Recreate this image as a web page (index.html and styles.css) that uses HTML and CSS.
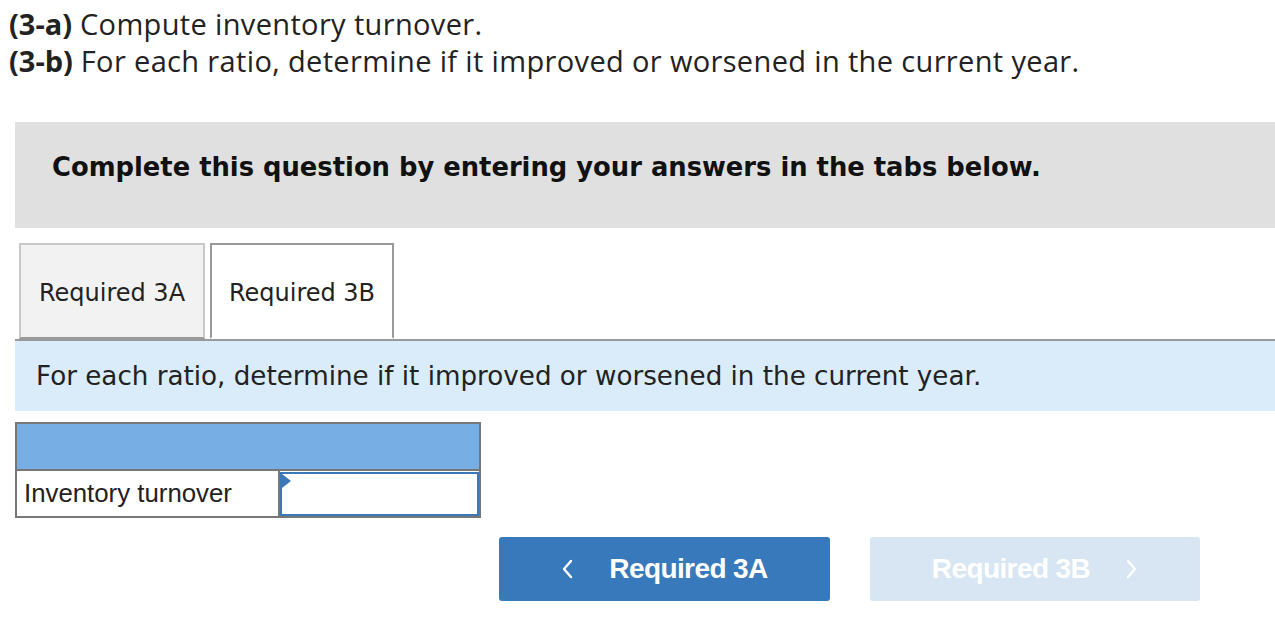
FILE: index.html
```html
<!DOCTYPE html>
<html>
<head>
<meta charset="utf-8">
<link rel="stylesheet" href="styles.css">
</head>
<body>
<div class="intro">
  <p class="line"><b>(3-a)</b> Compute inventory turnover.</p>
  <p class="line"><b>(3-b)</b> For each ratio, determine if it improved or worsened in the current year.</p>
</div>
<div class="wrap">
  <div class="notice">Complete this question by entering your answers in the tabs below.</div>
  <div class="tabs">
    <div class="tab tab-off">Required 3A</div>
    <div class="tab tab-on">Required 3B</div>
  </div>
  <div class="prompt">For each ratio, determine if it improved or worsened in the current year.</div>
  <div class="grid">
    <div class="grid-head"></div>
    <div class="grid-row">
      <div class="cell-label">Inventory turnover</div>
      <div class="cell-input"><span class="flag"></span></div>
    </div>
  </div>
  <div class="nav">
    <div class="btn btn-prev"><svg class="chev chev-l" width="14" height="22" viewBox="0 0 14 22"><polyline points="10,3 3,11 10,19" fill="none" stroke="#fff" stroke-width="2.4" stroke-linecap="round" stroke-linejoin="round"/></svg>Required 3A</div>
    <div class="btn btn-next">Required 3B<svg class="chev chev-r" width="14" height="22" viewBox="0 0 14 22"><polyline points="4,3 11,11 4,19" fill="none" stroke="#fff" stroke-width="2.4" stroke-linecap="round" stroke-linejoin="round"/></svg></div>
  </div>
</div>
</body>
</html>
```
FILE: styles.css
```css
html, body { margin: 0; padding: 0; background: #fff; }
body { width: 1275px; overflow: hidden; }
.intro { padding: 5px 0 0 9px; font-family: "Open Sans", "Noto Sans", sans-serif; color: #222; }
.line { margin: 0; font-size: 29px; line-height: 37px; letter-spacing: 0.35px; }
.line b { font-weight: 700; letter-spacing: 0; }
.wrap { padding-left: 15px; margin-top: 43px; }
.notice {
  background: #e0e0e0; height: 106px; box-sizing: border-box; display: flex; align-items: center;
  padding: 0 0 16px 37px; font-family: "DejaVu Sans", Verdana, sans-serif; font-weight: 700;
  font-size: 25.8px; color: #111;
}
.tabs { display: flex; gap: 5px; padding: 15px 0 0 4px; border-bottom: 2px solid #999; height: 96px; }
.tab {
  height: 96px; box-sizing: border-box; display: flex; align-items: center; justify-content: center;
  padding-top: 4px;
  font-family: "DejaVu Sans", Verdana, sans-serif; font-size: 24px; color: #222;
  margin-bottom: -2px;
}
.tab-off { width: 186px; background: #f2f2f2; border: 2px solid #c8c8c8; border-bottom: 2px solid #999; }
.tab-on { width: 184px; background: #fff; border: 2px solid #999; border-bottom: 2px solid #fff; }
.prompt {
  background: #daecfa; height: 70px; display: flex; align-items: center; padding-left: 21px;
  font-family: "DejaVu Sans", Verdana, sans-serif; font-size: 26.2px; color: #222;
}
.grid { width: 466px; margin-top: 11px; border: 2px solid #777; box-sizing: border-box; }
.grid-head { height: 45px; background: #77aee4; border-bottom: 2px solid #777; }
.grid-row { display: flex; height: 45px; }
.cell-label {
  width: 263px; border-right: 2px solid #777; display: flex; align-items: center; padding-left: 7px;
  box-sizing: border-box; font-family: "Liberation Sans", Arial, sans-serif; font-size: 25.8px; color: #222;
}
.cell-input { flex: 1; border: 2px solid #3a78b8; position: relative; margin: 1px 0 0 0; }
.flag {
  position: absolute; left: 0; top: 0; width: 0; height: 0;
  border-top: 7px solid transparent; border-bottom: 7px solid transparent; border-left: 9px solid #3a78b8;
}
.nav { display: flex; gap: 40px; padding: 19px 0 0 484px; }
.btn {
  width: 331px; height: 64px; border-radius: 3px; display: flex; align-items: center; justify-content: center;
  font-family: "Liberation Sans", Arial, sans-serif; font-weight: 700; font-size: 28px; color: #fff;
  letter-spacing: -0.6px;
}
.btn-prev { background: #3779ba; }
.btn-next { background: #d8e5f2; width: 330px; }
.chev { display: block; }
.chev-l { margin-right: 34px; }
.chev-r { margin-left: 34px; }
```
